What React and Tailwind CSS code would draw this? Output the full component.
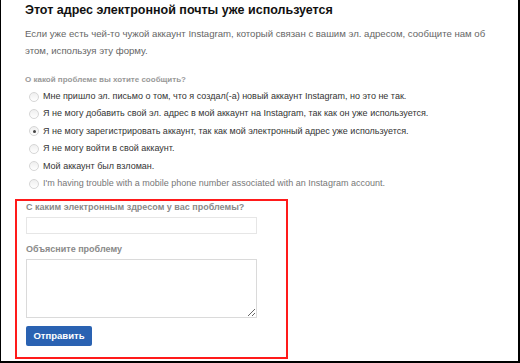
const reasons = [
  { label: 'Мне пришло эл. письмо о том, что я создал(-а) новый аккаунт Instagram, но это не так.' },
  { label: 'Я не могу добавить свой эл. адрес в мой аккаунт на Instagram, так как он уже используется.' },
  { label: 'Я не могу зарегистрировать аккаунт, так как мой электронный адрес уже используется.', checked: true },
  { label: 'Я не могу войти в свой аккаунт.' },
  { label: 'Мой аккаунт был взломан.' },
  { label: "I'm having trouble with a mobile phone number associated with an Instagram account.", muted: true },
];

function Radio({ checked }) {
  return (
    <span className="w-[10px] h-[10px] rounded-full border border-[#d6d6d6] bg-gradient-to-b from-[#efefef] to-white flex items-center justify-center shrink-0">
      {checked && <span className="w-[3px] h-[3px] rounded-full bg-[#444]" />}
    </span>
  );
}

export default function App() {
  return (
    <div
      className="w-[520px] h-[363px] bg-white border-l border-r-2 border-b-2 border-black overflow-hidden"
      style={{ fontFamily: '"Liberation Sans", Arial, sans-serif' }}
    >
      <div className="pl-[24px] pr-3">
        <h1 className="text-[12.5px] leading-[20px] font-bold text-[#111]">
          Этот адрес электронной почты уже используется
        </h1>
        <p className="mt-[5px] w-[480px] text-[9.6px] leading-[17px] text-[#666]">
          Если уже есть чей-то чужой аккаунт Instagram, который связан с вашим эл. адресом, сообщите нам об этом, используя эту форму.
        </p>
        <p className="mt-[14px] text-[8px] leading-[14px] font-bold text-[#999]">
          О какой проблеме вы хотите сообщить?
        </p>
        <div className="mt-[1px] pl-[4px] flex flex-col">
          {reasons.map((r, i) => (
            <label key={i} className="flex items-center gap-[4px] h-[17.4px]">
              <Radio checked={r.checked} />
              <span className={`text-[9px] whitespace-nowrap ${r.muted ? 'text-[#777]' : 'text-[#333]'}`}>
                {r.label}
              </span>
            </label>
          ))}
        </div>
      </div>

      <div className="ml-[14px] mt-[7px] w-[273px] h-[160px] border-2 border-[#ff1a1a] pl-[9px]">
        <p className="text-[9px] leading-[12px] font-bold text-[#8a8a8a]">
          С каким электронным здресом у вас проблемы?
        </p>
        <input className="mt-[4px] block w-[231px] h-[17px] border border-[#e6e6e6] bg-white outline-none" />
        <p className="mt-[9px] text-[9px] leading-[12px] font-bold text-[#8a8a8a]">
          Объясните проблему
        </p>
        <textarea className="mt-[4px] block w-[231px] h-[59px] border border-[#dadada] bg-white resize outline-none" />
        <button className="mt-[8px] w-[66px] h-[20px] rounded-[2px] bg-[#2a62b2] text-white text-[9.5px] font-bold">
          Отправить
        </button>
      </div>
    </div>
  );
}
